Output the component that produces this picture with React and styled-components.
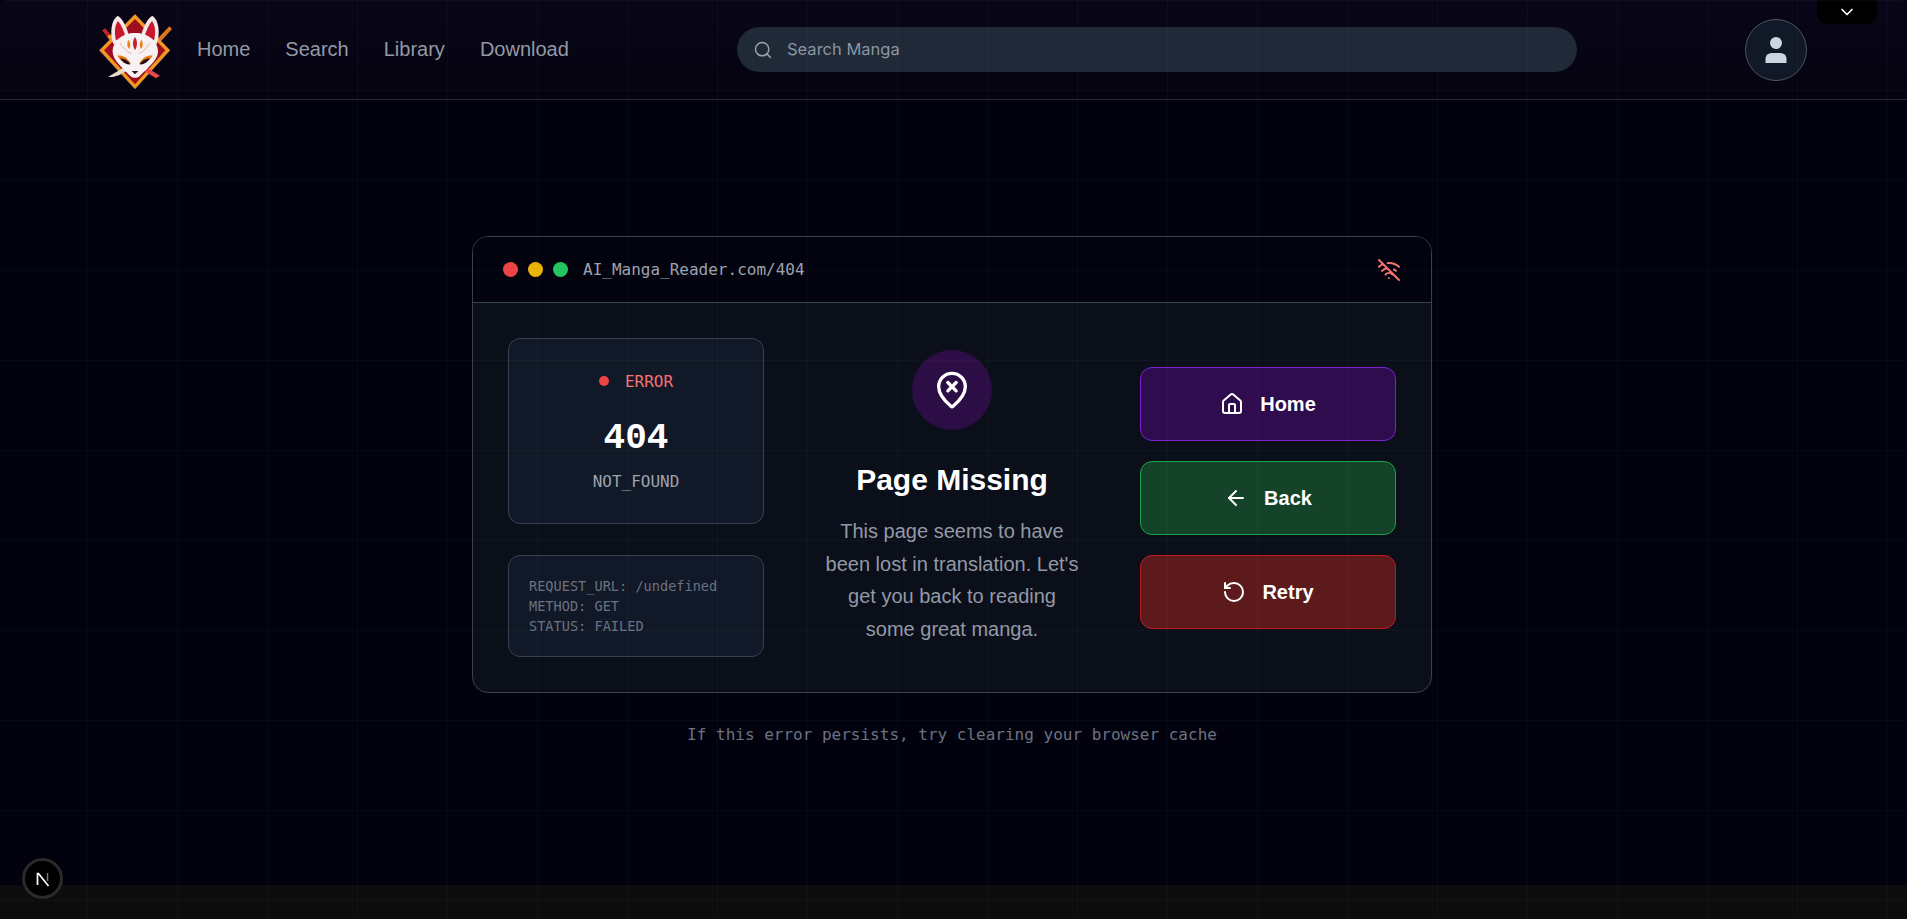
import React from 'react';
import styled, {createGlobalStyle} from 'styled-components';
import {ArrowLeft, ChevronDown, House, MapPinXInside, RotateCcw, Search, WifiOff} from 'lucide-react';

const mono = '"DejaVu Sans Mono", "Liberation Mono", monospace';

const GlobalStyle = createGlobalStyle`
    html, body {
        margin: 0;
        padding: 0;
        background: #0c0c0c;
        font-family: "Liberation Sans", Arial, sans-serif;
    }
    * {
        box-sizing: border-box;
    }
`;

const GridOverlay = styled.div`
    position: fixed;
    inset: 0;
    z-index: 5;
    pointer-events: none;
    background-image:
        linear-gradient(rgba(255, 255, 255, 0.026) 1px, transparent 1px),
        linear-gradient(90deg, rgba(255, 255, 255, 0.026) 1px, transparent 1px);
    background-size: 90px 90px;
    background-position: -3px 0;
`;

const Page = styled.div`
    height: 885px;
    background: #02020e;
    overflow: hidden;
`;

const Navbar = styled.header`
    position: relative;
    display: flex;
    align-items: center;
    height: 100px;
    padding-left: 90px;
    background: linear-gradient(180deg, #0a0618 0%, #04030f 100%);
    border-bottom: 1px solid #2a2440;
    border-radius: 6px 6px 0 0;
`;

const LogoMark = styled.svg`
    width: 90px;
    height: 85px;
    flex: none;
`;

const NavLinks = styled.nav`
    display: flex;
    gap: 35px;
    margin: -2px 0 0 17px;
    width: 540px;
`;

const NavLink = styled.a`
    font-size: 20px;
    line-height: 28px;
    color: #9399a6;
`;

const SearchBar = styled.div`
    display: flex;
    align-items: center;
    gap: 12px;
    width: 840px;
    height: 45px;
    padding-left: 16px;
    border-radius: 23px;
    background: #1f2937;
    color: #9ca3af;
`;

const SearchInput = styled.input`
    flex: 1;
    border: 0;
    outline: 0;
    margin-top: -2px;
    background: transparent;
    font-family: Inter, sans-serif;
    font-size: 16.5px;
    color: #9ca3af;
    &::placeholder {
        color: #8b95a5;
        opacity: 1;
    }
`;

const Avatar = styled.button`
    display: flex;
    align-items: center;
    justify-content: center;
    width: 62px;
    height: 62px;
    margin-left: 168px;
    padding: 0;
    border: 1px solid #4b5563;
    border-radius: 50%;
    background: #111827;
`;

const ToggleTab = styled.div`
    position: absolute;
    top: 0;
    right: 30px;
    display: flex;
    align-items: center;
    justify-content: center;
    width: 60px;
    height: 24px;
    border-radius: 0 0 10px 10px;
    background: #000;
    color: #fff;
`;

const Main = styled.main`
    display: flex;
    flex-direction: column;
    align-items: center;
    padding: 136px 3px 0 0;
`;

const Window = styled.section`
    width: 960px;
    height: 457px;
    border: 1px solid #374151;
    border-radius: 16px;
    background: #0b0f1a;
    overflow: hidden;
`;

const WindowBar = styled.div`
    display: flex;
    align-items: center;
    height: 66px;
    padding: 0 30px;
    background: #02030e;
    border-bottom: 1px solid #374151;
`;

const Dots = styled.div`
    display: flex;
    gap: 10px;
    margin-right: 15px;
`;

const Dot = styled.span`
    width: 15px;
    height: 15px;
    border-radius: 50%;
    background: ${props => props.$color};
`;

const WindowUrl = styled.span`
    flex: 1;
    font-family: ${mono};
    font-size: 16px;
    color: #9ca3af;
`;

const WindowBody = styled.div`
    display: grid;
    grid-template-columns: 256px 1fr 256px;
    height: 390px;
    padding: 35px;
`;

const StatusColumn = styled.div`
    display: flex;
    flex-direction: column;
    gap: 31px;
`;

const Panel = styled.div`
    border: 1px solid #374151;
    border-radius: 12px;
    background: #111827;
`;

const ErrorPanel = styled(Panel)`
    display: flex;
    flex-direction: column;
    align-items: center;
    height: 186px;
    padding-top: 30px;
    font-family: ${mono};
`;

const ErrorLabel = styled.div`
    display: flex;
    align-items: center;
    gap: 16px;
    height: 24px;
    font-size: 16px;
    color: #f87171;
`;

const ErrorDot = styled.span`
    width: 10px;
    height: 10px;
    border-radius: 50%;
    background: #ef4444;
`;

const ErrorCode = styled.div`
    margin-top: 26px;
    font-family: "Liberation Mono", monospace;
    font-size: 36px;
    line-height: 40px;
    font-weight: 700;
    color: #fff;
`;

const ErrorName = styled.div`
    margin-top: 11px;
    font-size: 16px;
    line-height: 24px;
    color: #9ca3af;
`;

const RequestPanel = styled(Panel)`
    height: 102px;
    padding: 20px;
    font-family: ${mono};
    font-size: 13.6px;
    line-height: 20px;
    color: #6b7280;
`;

const MessageColumn = styled.div`
    display: flex;
    flex-direction: column;
    align-items: center;
    justify-content: center;
    text-align: center;
`;

const MissingIcon = styled.div`
    display: flex;
    align-items: center;
    justify-content: center;
    width: 80px;
    height: 80px;
    margin-top: -1px;
    border-radius: 50%;
    background: #2c0d45;
    color: #fff;
`;

const Title = styled.h1`
    margin: 32px 0 0;
    font-size: 30px;
    line-height: 36px;
    font-weight: 700;
    color: #fff;
`;

const Description = styled.p`
    width: 262px;
    margin: 17px 0 0;
    font-size: 20px;
    line-height: 32.5px;
    color: #9399a6;
`;

const ActionColumn = styled.div`
    display: flex;
    flex-direction: column;
    justify-content: center;
    gap: 20px;
`;

const ActionButton = styled.button`
    display: flex;
    align-items: center;
    justify-content: center;
    gap: 16px;
    height: 74px;
    border: 1px solid ${props => props.$border};
    border-radius: 12px;
    background: ${props => props.$fill};
    font-family: "Liberation Sans", Arial, sans-serif;
    font-size: 20px;
    font-weight: 700;
    color: #fff;
`;

const Hint = styled.p`
    margin: 32px 0 0;
    font-family: ${mono};
    font-size: 16px;
    line-height: 20px;
    color: #6b7280;
`;

const DevBadge = styled.div`
    position: fixed;
    left: 22px;
    bottom: 20px;
    z-index: 6;
    display: flex;
    align-items: center;
    justify-content: center;
    width: 41px;
    height: 41px;
    border: 3px solid #2a2a2a;
    border-radius: 50%;
    background: #000;
`;

function FoxLogo() {
    return (
        <LogoMark viewBox="0 0 270 255">
            <path d="M36 70 L46 64 L74 98 L64 106 Z" fill="#c4202c" />
            <path d="M52 88 L62 82 L68 92 L58 98 Z" fill="#e8a020" />
            <path d="M238 58 L246 66 L208 108 L198 100 Z" fill="#e0741c" />
            <path d="M135 22 L240 130 L135 246 L28 130 Z" fill="#f29a1c" stroke="#c07ac0" strokeWidth="1" />
            <path d="M135 36 L226 130 L135 232 L42 130 Z" fill="#9d0f1f" />
            <path d="M70 112 C58 78 64 38 83 26 C100 36 112 66 118 90 Z" fill="#f4e8ea" />
            <path d="M78 100 C72 78 74 54 84 42 C94 54 102 72 106 88 Z" fill="#c8182e" />
            <path d="M200 112 C212 78 206 38 187 26 C170 36 158 66 152 90 Z" fill="#f4e8ea" />
            <path d="M192 100 C198 78 196 54 186 42 C176 54 168 72 164 88 Z" fill="#c8182e" />
            <path d="M54 210 L104 180 L112 190 C90 206 70 212 54 210 Z" fill="#e8dcd0" />
            <path d="M210 206 L164 178 L156 188 L198 214 Z" fill="#e8474c" />
            <path d="M135 78 C175 78 204 102 204 134 C204 160 168 186 150 206 C142 214 128 214 120 206 C102 186 68 160 68 134 C68 102 97 78 135 78 Z" fill="#f7f1f3" />
            <path d="M135 90 C143 102 143 116 135 130 C127 116 127 102 135 90 Z" fill="#c8202c" />
            <path d="M116 98 C122 108 122 118 118 126 C110 118 110 106 116 98 Z" fill="#ee8420" />
            <path d="M154 98 C160 106 160 118 152 126 C148 118 148 108 154 98 Z" fill="#ee8420" />
            <path d="M90 108 C98 120 108 134 124 140" fill="none" stroke="#d0a07a" strokeWidth="2" />
            <path d="M180 108 C172 120 162 134 146 140" fill="none" stroke="#d0a07a" strokeWidth="2" />
            <path d="M82 146 C96 144 112 150 122 170 C108 172 92 162 82 146 Z" fill="#e87a18" />
            <path d="M188 146 C174 144 158 150 148 170 C162 172 178 162 188 146 Z" fill="#e87a18" />
            <path d="M90 154 C102 154 114 160 122 172 C108 174 98 166 90 154 Z" fill="#2a0c10" />
            <path d="M180 154 C168 154 156 160 148 172 C162 174 172 166 180 154 Z" fill="#2a0c10" />
            <path d="M125 192 L145 192 L135 202 Z" fill="#3a1216" />
        </LogoMark>
    );
}

function UserGlyph() {
    return (
        <svg width="24" height="28" viewBox="0 0 24 28" fill="#cbd5e1">
            <circle cx="12" cy="7" r="6" />
            <path d="M1.5 27 V23 C1.5 18.5 5 17 9 17 H15 C19 17 22.5 18.5 22.5 23 V27 Z" />
        </svg>
    );
}

function NextGlyph() {
    return (
        <svg width="18" height="18" viewBox="0 0 18 18" fill="none">
            <path d="M3.5 15 V3.5 H4.5 L14.5 16" stroke="#fff" strokeWidth="1.7" />
            <path d="M13.5 3 V11" stroke="#777" strokeWidth="1.5" />
        </svg>
    );
}

function App() {
    return (
        <>
            <GlobalStyle />
            <GridOverlay />
            <Page>
                <Navbar>
                    <FoxLogo />
                    <NavLinks>
                        <NavLink>Home</NavLink>
                        <NavLink>Search</NavLink>
                        <NavLink>Library</NavLink>
                        <NavLink>Download</NavLink>
                    </NavLinks>
                    <SearchBar>
                        <Search size={20} strokeWidth={1.75} />
                        <SearchInput placeholder="Search Manga" />
                    </SearchBar>
                    <Avatar>
                        <UserGlyph />
                    </Avatar>
                    <ToggleTab>
                        <ChevronDown size={20} />
                    </ToggleTab>
                </Navbar>
                <Main>
                    <Window>
                        <WindowBar>
                            <Dots>
                                <Dot $color="#ef4444" />
                                <Dot $color="#eab308" />
                                <Dot $color="#22c55e" />
                            </Dots>
                            <WindowUrl>AI_Manga_Reader.com/404</WindowUrl>
                            <WifiOff size={24} color="#f87171" />
                        </WindowBar>
                        <WindowBody>
                            <StatusColumn>
                                <ErrorPanel>
                                    <ErrorLabel>
                                        <ErrorDot />
                                        ERROR
                                    </ErrorLabel>
                                    <ErrorCode>404</ErrorCode>
                                    <ErrorName>NOT_FOUND</ErrorName>
                                </ErrorPanel>
                                <RequestPanel>
                                    <div>REQUEST_URL: /undefined</div>
                                    <div>METHOD: GET</div>
                                    <div>STATUS: FAILED</div>
                                </RequestPanel>
                            </StatusColumn>
                            <MessageColumn>
                                <MissingIcon>
                                    <MapPinXInside size={40} />
                                </MissingIcon>
                                <Title>Page Missing</Title>
                                <Description>
                                    This page seems to have been lost in translation. Let's get you back to reading some great manga.
                                </Description>
                            </MessageColumn>
                            <ActionColumn>
                                <ActionButton $fill="#2e0c4d" $border="#7e22ce">
                                    <House size={24} />
                                    Home
                                </ActionButton>
                                <ActionButton $fill="#14432a" $border="#16a34a">
                                    <ArrowLeft size={24} />
                                    Back
                                </ActionButton>
                                <ActionButton $fill="#5d1a1c" $border="#b91c1c">
                                    <RotateCcw size={24} />
                                    Retry
                                </ActionButton>
                            </ActionColumn>
                        </WindowBody>
                    </Window>
                    <Hint>If this error persists, try clearing your browser cache</Hint>
                </Main>
            </Page>
            <DevBadge>
                <NextGlyph />
            </DevBadge>
        </>
    );
}

export default App;
